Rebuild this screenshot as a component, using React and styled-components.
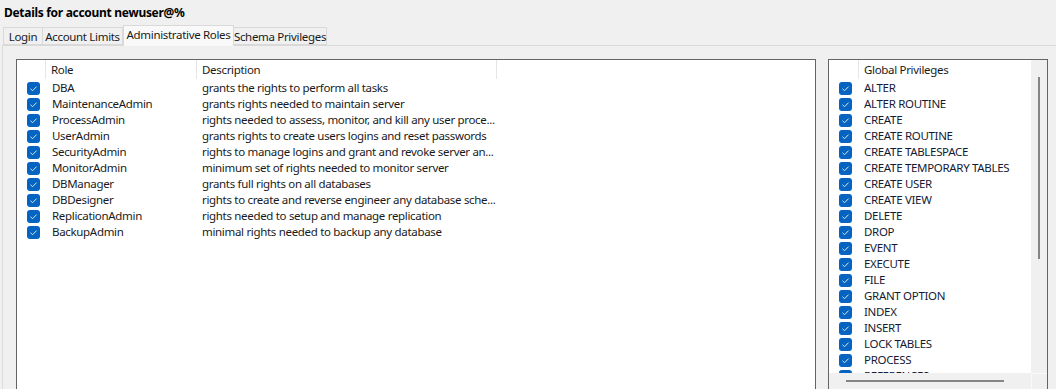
import React from 'react';
import styled, { createGlobalStyle } from 'styled-components';

const GlobalStyle = createGlobalStyle`
  html, body {
    margin: 0;
    padding: 0;
    background: #f0f0f0;
    overflow: hidden;
  }
  * {
    box-sizing: border-box;
  }
`;

const Window = styled.div`
  width: 1056px;
  height: 390px;
  display: flex;
  flex-direction: column;
  background: #f0f0f0;
  font-family: "Noto Sans", "Open Sans", sans-serif;
  font-size: 11.5px;
  letter-spacing: -0.32px;
  color: #1a1a1a;
`;

const Title = styled.div`
  height: 25px;
  padding: 4px 0 0 4px;
  font-weight: 700;
  font-size: 12px;
  letter-spacing: -0.3px;
  color: #000;
`;

const TabBar = styled.div`
  height: 20px;
  display: flex;
  align-items: flex-end;
  padding-left: 3px;
  position: relative;
  z-index: 1;
`;

const Tab = styled.div`
  height: ${({ active }) => (active ? '21px' : '18px')};
  margin-bottom: ${({ active }) => (active ? '-1px' : '0')};
  width: ${({ w }) => w}px;
  display: flex;
  align-items: center;
  justify-content: center;
  background: ${({ active }) => (active ? '#f9f9f9' : '#f0f0f0')};
  border: 1px solid #d9d9d9;
  border-bottom: ${({ active }) => (active ? 'none' : '1px solid #d9d9d9')};
  border-left: ${({ first, active }) => (first || active ? '1px solid #d9d9d9' : 'none')};
  padding-bottom: ${({ active }) => (active ? '3px' : '0')};
  white-space: nowrap;
`;

const Pane = styled.div`
  flex: 1;
  display: flex;
  gap: 12px;
  margin-left: 2px;
  padding: 13px 8px 0 13px;
  border-top: 1px solid #d9d9d9;
  border-left: 1px solid #dcdcdc;
  background: #f0f0f0;
  min-height: 0;
`;

const ListBox = styled.div`
  width: ${({ w }) => w}px;
  flex: none;
  border: 1px solid #646464;
  background: #fff;
  display: flex;
  flex-direction: column;
  overflow: hidden;
`;

const Body = styled.div`
  flex: 1;
  display: flex;
  min-height: 0;
`;

const Content = styled.div`
  flex: 1;
  overflow: hidden;
`;

const HeaderRow = styled.div`
  height: 20px;
  display: flex;
`;

const HeaderCell = styled.div`
  width: ${({ w }) => (w ? `${w}px` : 'auto')};
  flex: none;
  height: 19px;
  padding-left: 5px;
  display: flex;
  align-items: center;
  border-right: ${({ sep }) => (sep ? '1px solid #e5e5e5' : 'none')};
  white-space: nowrap;
`;

const Row = styled.div`
  height: 16px;
  display: flex;
  align-items: center;
`;

const CheckCell = styled.div`
  width: ${({ w }) => w}px;
  flex: none;
  padding-left: 10px;
  display: flex;
  align-items: center;
`;

const TextCell = styled.div`
  width: ${({ w }) => (w ? `${w}px` : 'auto')};
  flex: none;
  padding-left: ${({ pad }) => pad}px;
  white-space: nowrap;
  line-height: 16px;
  color: ${({ tone }) => tone || '#1a1a1a'};
`;

const VScroll = styled.div`
  width: 16px;
  flex: none;
  background: #f0f0f0;
  padding: 17px 0 0 7px;
`;

const VThumb = styled.div`
  width: 2px;
  height: 182px;
  background: #858585;
`;

const HScrollRow = styled.div`
  height: 16px;
  flex: none;
  display: flex;
`;

const HScroll = styled.div`
  flex: 1;
  background: #f0f0f0;
  padding: 7px 0 0 17px;
`;

const HThumb = styled.div`
  width: 158px;
  height: 2px;
  background: #858585;
`;

const Corner = styled.div`
  width: 16px;
  background: #f0f0f0;
  border-left: 1px solid #fafafa;
  border-top: 1px solid #fafafa;
`;

const Check = () => (
  <svg width="13" height="13" viewBox="0 0 13 13">
    <rect x="0" y="0" width="13" height="13" rx="3" fill="#0563c1" />
    <polyline
      points="3.5,6.8 5.6,8.7 9.6,4.6"
      fill="none"
      stroke="#d8e8f8"
      strokeWidth="1"
    />
  </svg>
);

const roles = [
  ['DBA', 'grants the rights to perform all tasks'],
  ['MaintenanceAdmin', 'grants rights needed to maintain server'],
  ['ProcessAdmin', 'rights needed to assess, monitor, and kill any user proce...'],
  ['UserAdmin', 'grants rights to create users logins and reset passwords'],
  ['SecurityAdmin', 'rights to manage logins and grant and revoke server an...'],
  ['MonitorAdmin', 'minimum set of rights needed to monitor server'],
  ['DBManager', 'grants full rights on all databases'],
  ['DBDesigner', 'rights to create and reverse engineer any database sche...'],
  ['ReplicationAdmin', 'rights needed to setup and manage replication'],
  ['BackupAdmin', 'minimal rights needed to backup any database'],
];

const privileges = [
  'ALTER',
  'ALTER ROUTINE',
  'CREATE',
  'CREATE ROUTINE',
  'CREATE TABLESPACE',
  'CREATE TEMPORARY TABLES',
  'CREATE USER',
  'CREATE VIEW',
  'DELETE',
  'DROP',
  'EVENT',
  'EXECUTE',
  'FILE',
  'GRANT OPTION',
  'INDEX',
  'INSERT',
  'LOCK TABLES',
  'PROCESS',
  'REFERENCES',
];

const tabs = [
  { label: 'Login', w: 40 },
  { label: 'Account Limits', w: 80 },
  { label: 'Administrative Roles', w: 111 },
  { label: 'Schema Privileges', w: 93 },
];

export default function App() {
  const active = 2;

  return (
    <>
      <GlobalStyle />
      <Window>
        <Title>Details for account newuser@%</Title>
        <TabBar>
          {tabs.map((t, i) => (
            <Tab key={t.label} w={t.w} first={i === 0} active={i === active}>
              {t.label}
            </Tab>
          ))}
        </TabBar>
        <Pane>
          <ListBox w={800}>
            <HeaderRow>
              <HeaderCell w={29} sep />
              <HeaderCell w={151} sep>Role</HeaderCell>
              <HeaderCell w={300} sep>Description</HeaderCell>
            </HeaderRow>
            {roles.map(([name, desc]) => (
              <Row key={name}>
                <CheckCell w={29}>
                  <Check />
                </CheckCell>
                <TextCell w={151} pad={6}>{name}</TextCell>
                <TextCell w={300} pad={5}>{desc}</TextCell>
              </Row>
            ))}
          </ListBox>

          <ListBox w={220}>
            <Body>
              <Content>
                <HeaderRow>
                  <HeaderCell w={30} sep />
                  <HeaderCell>Global Privileges</HeaderCell>
                </HeaderRow>
                {privileges.map((p) => (
                  <Row key={p}>
                    <CheckCell w={30}>
                      <Check />
                    </CheckCell>
                    <TextCell pad={5} tone="#151b35">{p}</TextCell>
                  </Row>
                ))}
              </Content>
              <VScroll>
                <VThumb />
              </VScroll>
            </Body>
            <HScrollRow>
              <HScroll>
                <HThumb />
              </HScroll>
              <Corner />
            </HScrollRow>
          </ListBox>
        </Pane>
      </Window>
    </>
  );
}
